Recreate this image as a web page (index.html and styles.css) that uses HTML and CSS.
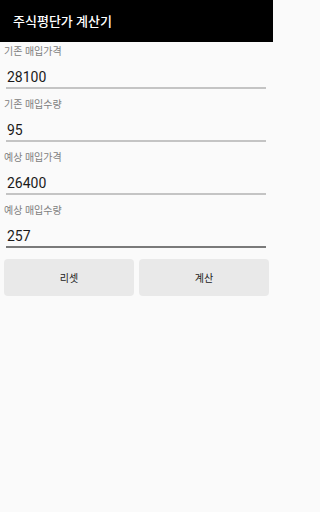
FILE: index.html
```html
<!DOCTYPE html>
<html lang="ko">
<head>
<meta charset="utf-8">
<link rel="stylesheet" href="styles.css">
</head>
<body>
<header class="appbar"><h1 class="title">주식평단가 계산기</h1></header>
<main class="form">
  <div class="field">
    <div class="label">기존 매입가격</div>
    <div class="value">28100</div>
  </div>
  <div class="field">
    <div class="label">기존 매입수량</div>
    <div class="value">95</div>
  </div>
  <div class="field">
    <div class="label">예상 매입가격</div>
    <div class="value">26400</div>
  </div>
  <div class="field">
    <div class="label">예상 매입수량</div>
    <div class="value dark">257</div>
  </div>
  <div class="buttons">
    <button class="btn">리셋</button>
    <button class="btn">계산</button>
  </div>
</main>
</body>
</html>
```
FILE: styles.css
```css
html {
  margin: 0;
  padding: 0;
  background: #fafafa;
}
body {
  margin: 0;
  padding: 0;
  width: 273px;
  min-height: 512px;
  background: #fafafa;
  font-family: Roboto, "Noto Sans CJK KR", sans-serif;
}
.appbar {
  height: 42px;
  background: #000;
  display: flex;
  align-items: center;
  padding-left: 13px;
}
.title {
  margin: 0;
  color: #fff;
  font-size: 13px;
  font-weight: 500;
  line-height: 16px;
  padding-top: 2px;
}
.form {
  display: flex;
  flex-direction: column;
  padding-top: 3px;
}
.field {
  display: flex;
  flex-direction: column;
  margin-bottom: 9px;
}
.label {
  margin-left: 4px;
  font-size: 10px;
  line-height: 14px;
  color: #808080;
}
.value {
  margin: 8px 7px 0 6px;
  padding-left: 1px;
  font-size: 14px;
  line-height: 20px;
  height: 20px;
  color: #1a1a1a;
  border-bottom: 2px solid #c4c4c4;
}
.value.dark {
  border-bottom-color: #7a7a7a;
}
.buttons {
  display: flex;
  gap: 5px;
  padding: 2px 4px 0;
}
.btn {
  flex: 1;
  height: 37px;
  border: none;
  border-radius: 4px;
  background: #e9e9e9;
  font-family: Roboto, "Noto Sans CJK KR", sans-serif;
  font-size: 10px;
  color: #222;
  padding: 0;
}
```
